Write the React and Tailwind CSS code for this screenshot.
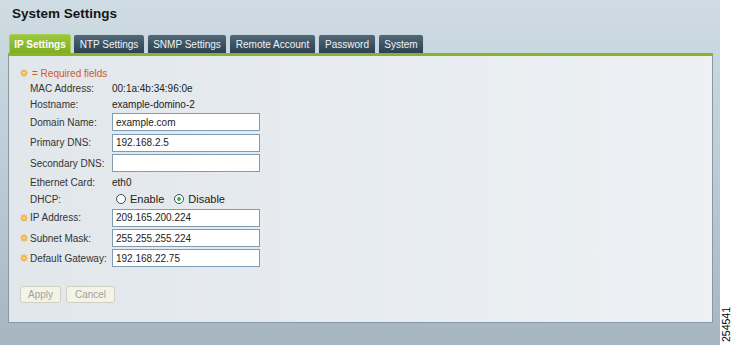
import { useState } from 'react';

const TABS = ['IP Settings', 'NTP Settings', 'SNMP Settings', 'Remote Account', 'Password', 'System'];
const TAB_WIDTHS = ['w-[62px]', 'w-[72px]', 'w-[80px]', 'w-[87px]', 'w-[58px]', 'w-[46px]'];

function ReqIcon() {
  return (
    <svg width="8" height="8" viewBox="0 0 10 10" className="shrink-0">
      <g stroke="#f0a12a" strokeWidth="1.5" strokeLinecap="round">
        <line x1="5" y1="0.8" x2="5" y2="9.2" />
        <line x1="0.8" y1="5" x2="9.2" y2="5" />
        <line x1="2" y1="2" x2="8" y2="8" />
        <line x1="8" y1="2" x2="2" y2="8" />
      </g>
      <circle cx="5" cy="5" r="2.9" fill="#f6b33a" />
      <circle cx="5" cy="5" r="1.2" fill="#fff1cc" />
    </svg>
  );
}

function Row({ h, label, required, children }) {
  return (
    <div className={`flex items-center ${h}`}>
      <div className="w-[10px] flex justify-start">{required && <ReqIcon />}</div>
      <div className="w-[82px] text-[#333] whitespace-nowrap">{label}</div>
      <div className="flex items-center">{children}</div>
    </div>
  );
}

function Field({ value }) {
  return (
    <div className="w-[148px] h-[18px] bg-white border border-[#7f9cb5] flex items-center pl-[3px] text-[#222]">
      {value}
    </div>
  );
}

function Radio({ checked, label, className }) {
  return (
    <label className={`flex items-center gap-[4px] ${className}`}>
      <span className="w-[10px] h-[10px] rounded-full border border-[#3a4f66] bg-white flex items-center justify-center">
        {checked && <span className="w-[4px] h-[4px] rounded-full bg-[#3cb43c]" />}
      </span>
      <span className="text-[#222] text-[11px]">{label}</span>
    </label>
  );
}

export default function App() {
  const [active] = useState(0);

  return (
    <div className="w-[733px] h-[345px] flex overflow-hidden text-[10px] font-['Liberation_Sans',Arial,sans-serif]">
      <div className="w-[720px] h-full bg-gradient-to-b from-[#cfdce3] via-[#bccbd5] to-[#a7b5c1] flex flex-col">
        {/* Title */}
        <div className="h-[34px] pl-[12px] pt-[5px] text-[13.5px] font-bold text-[#161616] leading-[18px]">
          System Settings
        </div>

        {/* Tabs */}
        <div className="flex pl-[9px] gap-[2px] h-[19px] items-end">
          {TABS.map((t, i) => (
            <div
              key={t}
              className={`${TAB_WIDTHS[i]} h-[19px] flex items-center justify-center rounded-t-[3px] whitespace-nowrap border-t border-x ${
                i === active
                  ? 'bg-gradient-to-b from-[#9cc93e] to-[#7fad22] border-[#a6cf55] text-white font-bold'
                  : 'bg-gradient-to-b from-[#526979] to-[#2b4152] border-[#c7d3db] text-[#eef3f6]'
              }`}
            >
              {t}
            </div>
          ))}
        </div>
        <div className="ml-[8px] w-[705px] h-[3px] bg-[#86b52a]" />

        {/* Panel */}
        <div className="ml-[8px] w-[705px] h-[267px] border-x border-b border-[#8797a5] bg-gradient-to-r from-[#e2e7ec] to-[#edf1f4] pt-[10px] pl-[11px]">
          <div className="flex items-center h-[14px] text-[#d5561f]">
            <ReqIcon />
            <span className="ml-[4px]">= Required fields</span>
          </div>
          <Row h="h-[16px]" label="MAC Address:">
            <span className="text-[#222]">00:1a:4b:34:96:0e</span>
          </Row>
          <Row h="h-[16px]" label="Hostname:">
            <span className="text-[#222]">example-domino-2</span>
          </Row>
          <Row h="h-[20px]" label="Domain Name:">
            <Field value="example.com" />
          </Row>
          <Row h="h-[21px]" label="Primary DNS:">
            <Field value="192.168.2.5" />
          </Row>
          <Row h="h-[20px]" label="Secondary DNS:">
            <Field value="" />
          </Row>
          <Row h="h-[18px]" label="Ethernet Card:">
            <span className="text-[#222]">eth0</span>
          </Row>
          <Row h="h-[16px]" label="DHCP:">
            <div className="flex items-center pl-[4px]">
              <Radio label="Enable" className="mr-[10px]" />
              <Radio checked label="Disable" />
            </div>
          </Row>
          <Row h="h-[21px]" label="IP Address:" required>
            <Field value="209.165.200.224" />
          </Row>
          <Row h="h-[20px]" label="Subnet Mask:" required>
            <Field value="255.255.255.224" />
          </Row>
          <Row h="h-[20px]" label="Default Gateway:" required>
            <Field value="192.168.22.75" />
          </Row>

          <div className="flex gap-[5px] mt-[18px]">
            <button className="w-[41px] h-[17px] rounded-[3px] border border-[#cfcfc2] bg-[#f4f3e8] text-[#a2a29a]">
              Apply
            </button>
            <button className="w-[49px] h-[17px] rounded-[3px] border border-[#cfcfc2] bg-[#f4f3e8] text-[#a2a29a]">
              Cancel
            </button>
          </div>
        </div>
      </div>

      {/* Right strip */}
      <div className="w-[13px] h-full bg-white flex flex-col justify-end items-center pb-[3px]">
        <div className="[writing-mode:vertical-rl] rotate-180 text-[10.5px] text-black leading-none">254541</div>
      </div>
    </div>
  );
}
